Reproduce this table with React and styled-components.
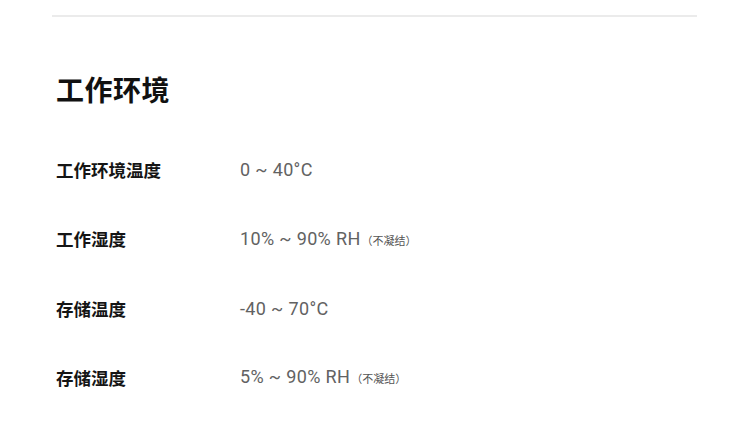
import React from "react";
import styled, { createGlobalStyle } from "styled-components";

const Global = createGlobalStyle`
  html, body { margin: 0; padding: 0; background: #fff; }
  body { font-family: "Noto Sans", "Noto Sans CJK SC", sans-serif; }
`;

const Page = styled.div`
  width: 750px;
  height: 422px;
  box-sizing: border-box;
  padding: 15px 53px 0 52px;
  background: #fff;
  overflow: hidden;
`;

const Divider = styled.div`
  height: 2px;
  background: #ebebeb;
`;

const Section = styled.section`
  padding-left: 4px;
`;

const Title = styled.h2`
  margin: 54px 0 0;
  font-family: "Noto Sans CJK SC", sans-serif;
  font-size: 28px;
  line-height: 36px;
  font-weight: 700;
  color: #111;
  letter-spacing: 0.5px;
`;

const Specs = styled.dl`
  margin: 51px 0 0;
  display: grid;
  grid-template-columns: 184px 1fr;
  row-gap: 44.8px;
  align-items: center;
`;

const Label = styled.dt`
  margin: 0;
  font-family: "Noto Sans CJK SC", sans-serif;
  font-size: 17.5px;
  line-height: 24px;
  font-weight: 700;
  color: #151515;
`;

const Value = styled.dd`
  margin: 0;
  font-family: Roboto, "Noto Sans CJK SC", sans-serif;
  font-size: 18px;
  line-height: 24px;
  font-weight: 400;
  letter-spacing: 0.35px;
  color: #626262;
`;

const Note = styled.span`
  font-family: "Noto Sans CJK SC", sans-serif;
  font-size: 11px;
  letter-spacing: 0;
  margin-left: 1px;
  color: #555;
`;

const rows = [
  { label: "工作环境温度", value: "0 ~ 40°C" },
  { label: "工作湿度", value: "10% ~ 90% RH", note: "（不凝结）" },
  { label: "存储温度", value: "-40 ~ 70°C" },
  { label: "存储湿度", value: "5% ~ 90% RH", note: "（不凝结）" },
];

export default function App() {
  return (
    <Page>
      <Global />
      <Divider />
      <Section>
        <Title>工作环境</Title>
        <Specs>
          {rows.map((r) => (
            <React.Fragment key={r.label}>
              <Label>{r.label}</Label>
              <Value>
                {r.value}
                {r.note && <Note>{r.note}</Note>}
              </Value>
            </React.Fragment>
          ))}
        </Specs>
      </Section>
    </Page>
  );
}
